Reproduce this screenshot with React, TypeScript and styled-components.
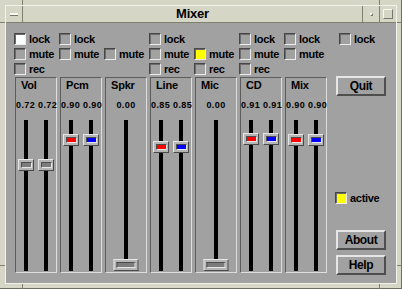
import styled, { createGlobalStyle } from 'styled-components'

const GlobalStyle = createGlobalStyle`
  html, body {
    margin: 0;
    padding: 0;
    background: #d6d6c6;
  }
  body {
    font-family: "Liberation Sans", Arial, sans-serif;
  }
`

const Window = styled.div`
  position: relative;
  box-sizing: border-box;
  width: 402px;
  height: 289px;
  padding: 5px 4px 4px 5px;
  background: #d6d6c6;
  border-right: 1px solid #6e6e60;
  border-bottom: 1px solid #6e6e60;
  display: flex;
`

const Handle = styled.div<{ $x: number; $y: number; $w: number; $h: number }>`
  position: absolute;
  left: ${(p) => p.$x}px;
  top: ${(p) => p.$y}px;
  width: ${(p) => p.$w}px;
  height: ${(p) => p.$h}px;
  background: #80806f;
`

const Inner = styled.div`
  flex: 1;
  display: flex;
  flex-direction: column;
  border: 1px solid #f2f2ea;
`

const TitleBar = styled.div`
  display: flex;
  height: 16px;
  border-bottom: 1px solid #80806f;
`

const FrameButton = styled.div<{ $side: 'left' | 'right' }>`
  width: 16px;
  display: flex;
  align-items: center;
  justify-content: center;
  ${(p) => (p.$side === 'left' ? 'border-right' : 'border-left')}: 1px solid #80806f;
`

const MenuGlyph = styled.div`
  width: 8px;
  height: 2px;
  background: #fafaf2;
  box-shadow: 0 1px 0 #77776a;
`

const MinGlyph = styled.div`
  box-sizing: border-box;
  width: 3px;
  height: 3px;
  border: 1px solid;
  border-color: #fafaf2 #77776a #77776a #fafaf2;
`

const MaxGlyph = styled.div`
  box-sizing: border-box;
  width: 10px;
  height: 10px;
  border: 1px solid;
  border-color: #fafaf2 #77776a #77776a #fafaf2;
`

const Title = styled.div`
  flex: 1;
  text-align: center;
  font: bold 13px/16px "Liberation Sans", Arial, sans-serif;
  letter-spacing: -0.2px;
  color: #000;
`

const Content = styled.div`
  flex: 1;
  display: flex;
  gap: 9px;
  padding: 8px 0 0 9px;
  background: #a1a1a1;
`

const Channels = styled.div`
  display: flex;
  gap: 3px;
`

const Strip = styled.div`
  width: 42px;
  display: flex;
  flex-direction: column;
`

const CheckRow = styled.div<{ $indent?: number }>`
  height: 15px;
  display: flex;
  align-items: center;
  gap: 3px;
  margin-left: ${(p) => (p.$indent ?? 0) - 1}px;
  font: bold 11px "Liberation Sans", Arial, sans-serif;
  letter-spacing: -0.3px;
  white-space: nowrap;
  color: #000;
`

const Box = styled.span<{ $fill: string }>`
  flex: none;
  box-sizing: border-box;
  width: 12px;
  height: 12px;
  border: 1px solid;
  border-color: #464646 #ececec #ececec #464646;
  box-shadow: inset 1px 1px 0 #6c6c6c;
  background: ${(p) => p.$fill};
`

const Panel = styled.div`
  box-sizing: border-box;
  margin-top: 1px;
  height: 196px;
  border: 1px solid;
  border-color: #5c5c5c #dedede #dedede #5c5c5c;
  display: flex;
  flex-direction: column;
`

const Label = styled.div`
  margin: 1px 0 0 5px;
  font: bold 11px/13px "Liberation Sans", Arial, sans-serif;
  letter-spacing: -0.2px;
  color: #000;
`

const Values = styled.div`
  margin-top: 8px;
  height: 11px;
  font: bold 9px/11px "Liberation Sans", Arial, sans-serif;
  letter-spacing: 0.4px;
  text-align: center;
  white-space: nowrap;
  color: #000;
`

const Sliders = styled.div`
  margin-top: 9px;
  height: 151px;
  display: flex;
`

const SliderCol = styled.div`
  position: relative;
  flex: 1;
  display: flex;
  justify-content: center;
`

const Track = styled.div`
  width: 4px;
  background: #000;
`

const Knob = styled.div<{ $wide: boolean }>`
  position: absolute;
  left: 50%;
  transform: translateX(-50%);
  box-sizing: border-box;
  width: ${(p) => (p.$wide ? 25 : 16)}px;
  height: 12px;
  border: 1px solid;
  border-color: #e6e6e6 #4a4a4a #4a4a4a #e6e6e6;
  background: #b6b6b6;
  display: flex;
  align-items: center;
  justify-content: center;
`

const Slot = styled.div<{ $color: string; $wide: boolean }>`
  box-sizing: border-box;
  width: ${(p) => (p.$wide ? 19 : 11)}px;
  height: 6px;
  border: 1px solid;
  border-color: #4c4c4c #e6e6e6 #e6e6e6 #4c4c4c;
  background: ${(p) => p.$color};
`

const RightCol = styled.div`
  width: 50px;
  display: flex;
  flex-direction: column;
`

const Button = styled.button<{ $gap: number }>`
  box-sizing: border-box;
  width: 50px;
  height: 20px;
  margin-top: ${(p) => p.$gap}px;
  padding: 0;
  border: 2px solid;
  border-color: #e6e6e6 #4e4e4e #4e4e4e #e6e6e6;
  background: #a1a1a1;
  font: bold 12px "Liberation Sans", Arial, sans-serif;
  letter-spacing: -0.4px;
  color: #000;
`

const ActiveRow = styled.div`
  margin-top: 94px;
`

type Check = { label: string; fill?: string } | null

type Channel = {
  name: string
  values: number[]
  colors: string[]
  checks: Check[]
}

const GRAY_SLOT = '#7c7c7c'

const channels: Channel[] = [
  {
    name: 'Vol',
    values: [0.72, 0.72],
    colors: [GRAY_SLOT, GRAY_SLOT],
    checks: [{ label: 'lock', fill: '#ffffff' }, { label: 'mute' }, { label: 'rec' }],
  },
  {
    name: 'Pcm',
    values: [0.9, 0.9],
    colors: ['#ff0000', '#0000ff'],
    checks: [{ label: 'lock' }, { label: 'mute' }, null],
  },
  { name: 'Spkr', values: [0], colors: [GRAY_SLOT], checks: [null, { label: 'mute' }, null] },
  {
    name: 'Line',
    values: [0.85, 0.85],
    colors: ['#ff0000', '#0000ff'],
    checks: [{ label: 'lock' }, { label: 'mute' }, { label: 'rec' }],
  },
  {
    name: 'Mic',
    values: [0],
    colors: [GRAY_SLOT],
    checks: [null, { label: 'mute', fill: '#ffff00' }, { label: 'rec' }],
  },
  {
    name: 'CD',
    values: [0.91, 0.91],
    colors: ['#ff0000', '#0000ff'],
    checks: [{ label: 'lock' }, { label: 'mute' }, { label: 'rec' }],
  },
  {
    name: 'Mix',
    values: [0.9, 0.9],
    colors: ['#ff0000', '#0000ff'],
    checks: [{ label: 'lock' }, { label: 'mute' }, null],
  },
]

function CheckBox({ label, fill = '#a1a1a1', indent }: { label: string; fill?: string; indent?: number }) {
  return (
    <CheckRow $indent={indent}>
      <Box $fill={fill} />
      {label}
    </CheckRow>
  )
}

function ChannelStrip({ channel }: { channel: Channel }) {
  const wide = channel.values.length === 1
  return (
    <Strip>
      {channel.checks.map((c, i) => (c ? <CheckBox key={i} label={c.label} fill={c.fill} /> : <CheckRow key={i} />))}
      <Panel>
        <Label>{channel.name}</Label>
        <Values>{channel.values.map((v) => v.toFixed(2)).join(' ')}</Values>
        <Sliders>
          {channel.values.map((v, i) => (
            <SliderCol key={i}>
              <Track />
              <Knob $wide={wide} style={{ top: Math.round((1 - v) * 139) }}>
                <Slot $wide={wide} $color={channel.colors[i]} />
              </Knob>
            </SliderCol>
          ))}
        </Sliders>
      </Panel>
    </Strip>
  )
}

export default function App() {
  return (
    <>
      <GlobalStyle />
      <Window>
        <Handle $x={22} $y={0} $w={1} $h={5} />
        <Handle $x={0} $y={22} $w={5} $h={1} />
        <Handle $x={379} $y={0} $w={1} $h={5} />
        <Handle $x={397} $y={22} $w={5} $h={1} />
        <Handle $x={0} $y={265} $w={5} $h={1} />
        <Handle $x={22} $y={284} $w={1} $h={5} />
        <Handle $x={379} $y={284} $w={1} $h={5} />
        <Handle $x={397} $y={265} $w={5} $h={1} />
        <Inner>
          <TitleBar>
            <FrameButton $side="left">
              <MenuGlyph />
            </FrameButton>
            <Title>Mixer</Title>
            <FrameButton $side="right">
              <MinGlyph />
            </FrameButton>
            <FrameButton $side="right">
              <MaxGlyph />
            </FrameButton>
          </TitleBar>
          <Content>
            <Channels>
              {channels.map((ch) => (
                <ChannelStrip key={ch.name} channel={ch} />
              ))}
            </Channels>
            <RightCol>
              <CheckBox label="lock" indent={4} />
              <Button $gap={30}>Quit</Button>
              <ActiveRow>
                <CheckBox label="active" fill="#ffff00" />
              </ActiveRow>
              <Button $gap={25}>About</Button>
              <Button $gap={5}>Help</Button>
            </RightCol>
          </Content>
        </Inner>
      </Window>
    </>
  )
}
